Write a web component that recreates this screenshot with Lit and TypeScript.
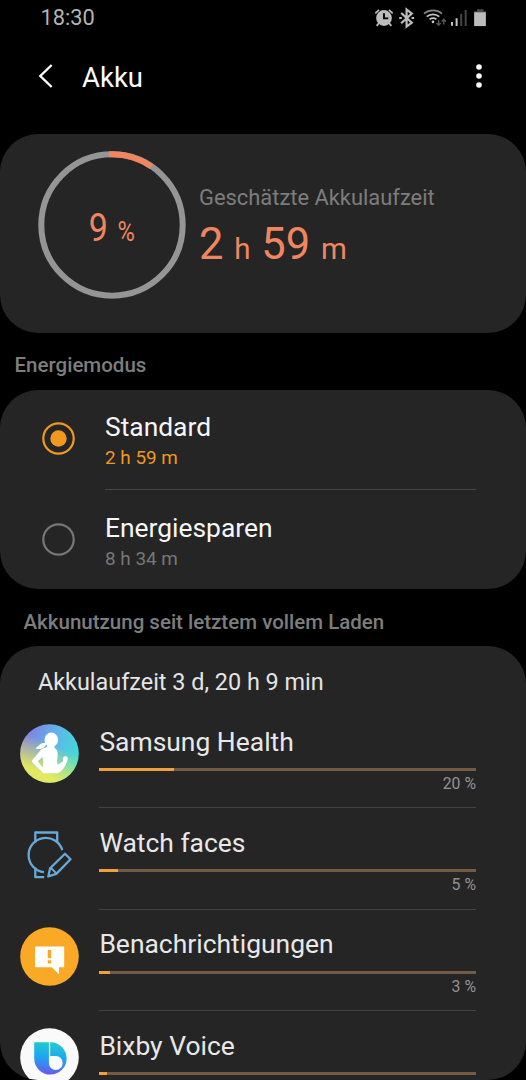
import { LitElement, html, css, svg } from "lit";
import { customElement, property } from "lit/decorators.js";

const icons: Record<string, unknown> = {
  health: svg`
    <defs>
      <linearGradient id="hl" x1="0.1" y1="0.2" x2="1" y2="0.5">
        <stop offset="0" stop-color="#8080e4"/><stop offset="0.5" stop-color="#60b4ea"/><stop offset="1" stop-color="#40dcd8"/>
      </linearGradient>
      <linearGradient id="hy" x1="0.65" y1="0.3" x2="0.35" y2="1">
        <stop offset="0.1" stop-color="#e8ee50" stop-opacity="0"/><stop offset="0.8" stop-color="#eaec5a" stop-opacity="0.95"/>
      </linearGradient>
    </defs>
    <circle cx="29.5" cy="29.5" r="29.3" fill="url(#hl)"/>
    <circle cx="29.5" cy="29.5" r="29.3" fill="url(#hy)"/>
    <g fill="#fff">
      <ellipse cx="31.300" cy="15.800" rx="6.800" ry="7.200"/>
      <path d="M26 18.800c-5.600-.5-7.200 3.200-10.500 5.700 4.500 1.300 9.300.3 11-4.500z"/>
      <path fill-rule="evenodd" d="M23.500 24.300C25.500 23.500 27.300 23.800 27.500 21H34.300L34.500 24C37.300 25.300 38 28 37.600 32C37.300 35 36.600 38 37.600 40.700L43.200 37.300C42 34.500 43.400 32.300 45.300 32.300C47.600 32.300 48.200 34 47.500 36.200C46 41.500 43 46.500 37.800 49.300H23.500L12.600 38.700C11.700 37.700 11.900 36.600 12.800 35.500L20.500 26.300C21.400 25.300 22.300 24.700 23.500 24.300ZM22.500 33L17.800 37.300L22.600 43.500C23.500 40 23.500 36.500 22.500 33Z"/>
    </g>`,
  watch: svg`
    <g fill="none" stroke="#69a9d9" stroke-width="2.300" stroke-linejoin="round">
      <path d="M15.300 16.500V6.500h21.900v10"/>
      <path d="M42.300 24.200A17.200 17.200 0 1 0 24 46.200"/>
      <path d="M15.300 41.500v9.700h8.900"/>
      <path d="M45 27.800l5.500 5.400-14.200 14.700-8 2.500 1.800-8.100z"/>
      <path d="M30.500 41.500l6 6" stroke-width="1.900"/>
    </g>`,
  notice: svg`
    <circle cx="29.500" cy="29.500" r="29.300" fill="#faa926"/>
    <path d="M15 19.500h29.200v20.700h-5.200v7l-7.300-7H15z" fill="#fff"/>
    <path d="M27.700 23h3.500v8.300h-3.500zM27.700 33.300h3.500v3.200h-3.500z" fill="#faa926"/>`,
  bixby: svg`
    <defs>
      <linearGradient id="bx" x1="0.6" y1="0" x2="0.5" y2="1">
        <stop offset="0" stop-color="#22cccb"/><stop offset="0.5" stop-color="#1fa4f2"/><stop offset="1" stop-color="#6a58ea"/>
      </linearGradient>
    </defs>
    <circle cx="29.500" cy="29.500" r="29.300" fill="#fafafa"/>
    <path fill="url(#bx)" d="M14.200 14.200H30.500A16.200 16.200 0 1 1 14.200 30.500Z"/>
    <path fill="#fafafa" d="M28.900 14V35A6.900 6.900 0 1 0 35.800 28.100H30.200V14Z"/>`,
};

@customElement("status-bar")
class StatusBar extends LitElement {
  static styles = css`
    :host { display: flex; justify-content: space-between; align-items: center; height: 36px; padding: 0 39px 0 40.500px; color: #b4b4b4; font-size: 22px; line-height: 36px; }
    .time { display: block; height: 36px; font-size: 21.800px; }
    .icons { display: block; }
  `;
  render() {
    return html`<span class="time">18:30</span>
      <svg class="icons" width="114" height="28" viewBox="373 4 114 28">
        <g fill="none" stroke="#bcbcbc">
          <circle cx="384" cy="18" r="7.900" fill="#bcbcbc" stroke="none"/>
          <path d="M384 13.300v5.100h4.300" stroke="#000" stroke-width="1.900"/>
          <path d="M375.300 13.300l3.700-3.500M392.700 13.300l-3.700-3.500" stroke-width="1.700"/>
          <path d="M379 23l-2.300 2.800M389 23l2.300 2.800" stroke-width="1.900"/>
          <path d="M401.200 13l10.600 9.600-5.200 4V9.500l5.200 4.100-10.600 9.600" stroke-width="2.200"/>
          <path d="M399.200 18h2.600M411.500 18h2.600" stroke-width="2.200"/>
        </g>
        <g fill="none" stroke-width="1.700">
          <path d="M424 13.600a14 14 0 0 1 18 0" stroke="#858585"/>
          <path d="M426.700 16.600a9.700 9.700 0 0 1 12.600 0" stroke="#c4c4c4"/>
          <path d="M429.600 19.300a6 6 0 0 1 6.800 0" stroke="#c4c4c4"/>
        </g>
        <circle cx="433" cy="21.900" r="1.300" fill="#c4c4c4"/>
        <path d="M438.600 20v5M436.500 22.900l2.100 2.300 2.100-2.300M443.800 24.500v-5M441.700 21.600l2.100-2.300 2.100 2.300" fill="none" stroke="#555" stroke-width="1.500"/>
        <path d="M451 25.800v-3.800h2v3.800zM455.600 18.300h2v7.700h-2z" fill="#c4c4c4"/>
        <path d="M460.200 14h2v12h-2zM464.700 10h2v16h-2z" fill="#454545"/>
        <path d="M477 9.200h6.500v2h2.400v2h-11.800v-2h2.900z" fill="#4a4a4a"/>
        <path d="M474.100 12.300h11.800v13.800h-11.800z" fill="#bcbcbc"/>
      </svg>`;
  }
}

@customElement("mode-option")
class ModeOption extends LitElement {
  @property() label = "";
  @property() time = "";
  @property({ type: Boolean }) selected = false;
  static styles = css`
    :host { display: grid; grid-template-columns: 33px 1fr; column-gap: 30px; align-items: center; height: 100px; }
    .title { font-size: 26.400px; line-height: 34px; color: #f6f6f6; }
    .time { font-size: 18.900px; line-height: 27px; color: #777; }
    .time.on { color: #f0981f; }
    .text { padding-top: 2px; }
    svg { display: block; margin-top: -2px; }
  `;
  render() {
    const c = this.selected ? "#f0981f" : "#777";
    return html`<svg width="33" height="33" viewBox="0 0 33 33">
        <circle cx="16.500" cy="16.500" r="15.200" fill="none" stroke=${c} stroke-width="2.200"/>
        ${this.selected ? svg`<circle cx="16.500" cy="16.500" r="8.200" fill=${c}/>` : ""}
      </svg>
      <div class="text">
        <div class="title">${this.label}</div>
        <div class="time ${this.selected ? "on" : ""}">${this.time}</div>
      </div>`;
  }
}

@customElement("usage-row")
class UsageRow extends LitElement {
  @property() label = "";
  @property() icon = "";
  @property({ type: Number }) percent = 0;
  @property({ type: Boolean }) last = false;
  static styles = css`
    :host { display: grid; grid-template-columns: 59px 377px; column-gap: 20px; height: 101.400px; }
    .icon { display: block; margin-top: 17.400px; }
    .body { box-sizing: border-box; height: 101.400px; border-bottom: 1.300px solid #434343; }
    .title { padding: 16.700px 0 0 0.400px; font-size: 26.450px; line-height: 36px; color: #e8e8e8; }
    .bar { height: 3px; margin-top: 8.300px; background: #735b43; }
    .fill { height: 100%; background: #f0a03a; }
    .value { text-align: right; font-size: 15.800px; line-height: 25px; color: #929292; }
  `;
  render() {
    return html`<svg class="icon" width="59" height="59" viewBox="0 0 59 59">${icons[this.icon]}</svg>
      <div class="body">
        <div class="title">${this.label}</div>
        <div class="bar"><div class="fill" style="width:${this.percent}%"></div></div>
        ${this.last ? "" : html`<div class="value">${this.percent} %</div>`}
      </div>`;
  }
}

@customElement("app-root")
class AppRoot extends LitElement {
  static styles = css`
    :host { display: flex; flex-direction: column; width: 526px; height: 1080px; overflow: hidden; background: #000; font-family: Roboto, sans-serif; }
    .header { display: flex; align-items: center; height: 80px; padding: 0 43px 0 38px; margin-bottom: 18px; }
    .header h1 { flex: 1; margin: 0 0 0 29px; padding-top: 3px; font-size: 27.500px; line-height: 40px; font-weight: 400; color: #fafafa; }
    .card { box-sizing: border-box; flex: none; border-radius: 38px; background: #252525; }
    .summary { display: flex; height: 198.500px; padding: 17.400px 0 0 38px; }
    .ring { display: grid; width: 148px; height: 148px; }
    .ring > * { grid-area: 1 / 1; }
    .level { justify-self: center; align-self: center; padding-top: 9px; color: #f08660; font-size: 39.500px; line-height: 50px; transform: scaleX(0.860); white-space: nowrap; word-spacing: 1.500px; }
    .level small { font-size: 27.500px; }
    .estimate { padding: 31.600px 0 0 13px; }
    .caption { font-size: 21.900px; line-height: 30px; color: #7d7d7d; }
    .remaining { padding-top: 2px; font-size: 43.500px; line-height: 60px; color: #f08660; white-space: nowrap; }
    .remaining small { font-size: 29.500px; }
    .section { flex: none; height: 57.200px; padding-left: 14.500px; box-sizing: border-box; font-size: 20.500px; line-height: 65px; font-weight: 500; color: #7d7d7d; }
    .section.usage-title { padding-left: 23.500px; line-height: 66px; }
    .modes { height: 199.500px; padding: 0 50px 0 42px; }
    .line { height: 1px; margin: -0.500px 0 0.500px 63px; background: #484848; }
    .usage { height: 433.600px; padding: 18px 0 0 20px; overflow: hidden; }
    .since { height: 42.500px; padding-left: 18px; font-size: 23.400px; line-height: 37px; color: #e4e4e4; }
  `;
  render() {
    return html`
      <status-bar></status-bar>
      <div class="header">
        <svg width="15" height="26" viewBox="0 0 15 26"><path d="M13.700 2L2.300 13l11.400 11" fill="none" stroke="#fafafa" stroke-width="2.400"/></svg>
        <h1>Akku</h1>
        <svg width="8" height="26" viewBox="0 0 8 26" fill="#fafafa"><circle cx="4" cy="4" r="2.800"/><circle cx="4" cy="13" r="2.800"/><circle cx="4" cy="22" r="2.800"/></svg>
      </div>
      <div class="card summary">
        <div class="ring">
          <svg width="148" height="148" viewBox="0 0 148 148" fill="none" stroke-width="6">
            <circle cx="74" cy="74" r="70.700" stroke="#959595"/>
            <path d="M71 3.300A70.700 70.700 0 0 1 113.500 15.400" stroke="#f08660"/>
          </svg>
          <div class="level">9 <small>%</small></div>
        </div>
        <div class="estimate">
          <div class="caption">Geschätzte Akkulaufzeit</div>
          <div class="remaining">2 <small>h</small> 59 <small>m</small></div>
        </div>
      </div>
      <div class="section">Energiemodus</div>
      <div class="card modes">
        <mode-option label="Standard" time="2 h 59 m" selected></mode-option>
        <div class="line"></div>
        <mode-option label="Energiesparen" time="8 h 34 m"></mode-option>
      </div>
      <div class="section usage-title">Akkunutzung seit letztem vollem Laden</div>
      <div class="card usage">
        <div class="since">Akkulaufzeit 3 d, 20 h 9 min</div>
        <usage-row icon="health" label="Samsung Health" percent="20"></usage-row>
        <usage-row icon="watch" label="Watch faces" percent="5"></usage-row>
        <usage-row icon="notice" label="Benachrichtigungen" percent="3"></usage-row>
        <usage-row icon="bixby" label="Bixby Voice" percent="2" last></usage-row>
      </div>`;
  }
}
